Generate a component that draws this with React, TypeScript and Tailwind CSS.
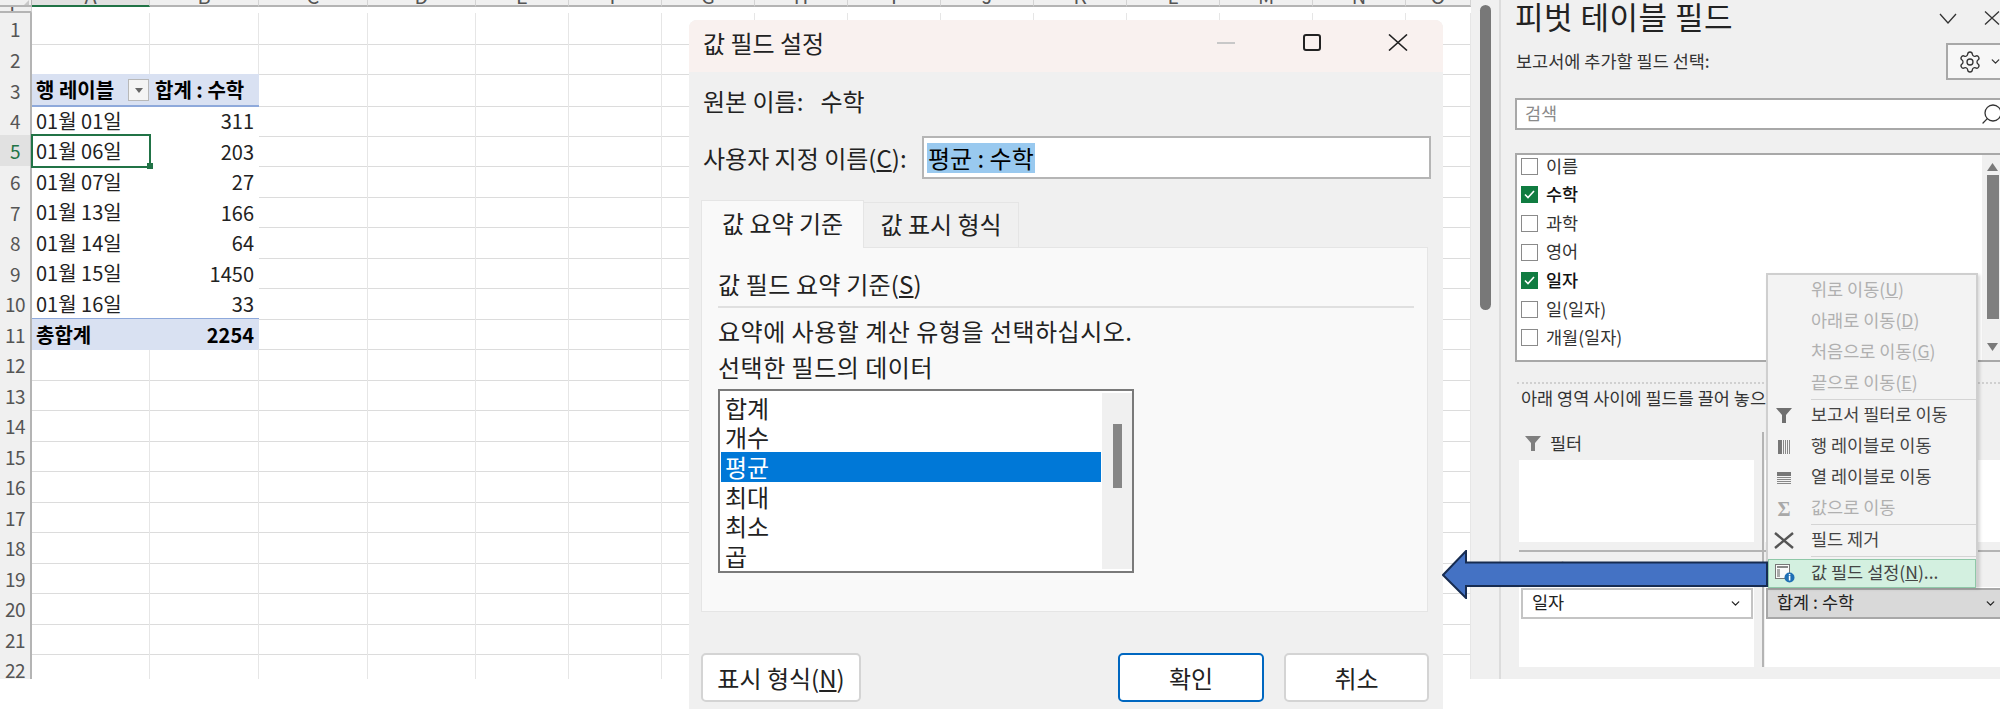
import { ChevronDown, Search, Settings } from "lucide-react"

const columns = ["A", "B", "C", "D", "E", "F", "G", "H", "I", "J", "K", "L", "M", "N", "O", "P"]

const pivotRows: Record<number, { label: string; value: string; kind?: "head" | "total" }> = {
  3: { label: "행 레이블", value: "합계 : 수학", kind: "head" },
  4: { label: "01월 01일", value: "311" },
  5: { label: "01월 06일", value: "203" },
  6: { label: "01월 07일", value: "27" },
  7: { label: "01월 13일", value: "166" },
  8: { label: "01월 14일", value: "64" },
  9: { label: "01월 15일", value: "1450" },
  10: { label: "01월 16일", value: "33" },
  11: { label: "총합계", value: "2254", kind: "total" },
}

const rowNumbers = Array.from({ length: 22 }, (_, i) => i + 1)
const gridTemplate =
  "grid grid-cols-[32px_118px_109px_109px_108px_93px_93px_93px_93px_93px_93px_93px_93px_93px_93px_65px]"

function Sheet() {
  return (
    <div className="w-[1471px] h-[679px] overflow-hidden bg-white text-[20px] text-[#222]">
      {/* Column headers, cut off by the crop */}
      <div className={`${gridTemplate} h-[13px]`}>
        <div className="flex justify-end items-start bg-[#f0f0f0] border-r border-b-2 border-[#b4b4b4] overflow-hidden">
          <svg width="12" height="11" className="mr-[2px]">
            <polygon points="12,0 12,10 2,10" fill="#c9c9c9" />
          </svg>
        </div>
        {columns.map((c, i) => (
          <div
            key={c}
            className={`flex justify-center items-start overflow-hidden border-r border-[#d4d4d4] text-[#555] ${
              i === 0 ? "bg-[#e1e1e1] border-b-2 border-b-[#217346]" : "bg-[#f0f0f0] border-b-2 border-b-[#b4b4b4]"
            }`}
          >
            <span className="block -mt-[14px] leading-[20px]">{c}</span>
          </div>
        ))}
      </div>

      {rowNumbers.map((n) => {
        const row = pivotRows[n]
        const isSelected = n === 5
        const fill = row?.kind ? "bg-[#d9e1f2] font-bold text-black" : ""
        return (
          <div key={n} className={`${gridTemplate} h-[30.55px]`}>
            <div
              className={`flex items-center justify-center border-r-2 border-b pt-[2px] border-r-[#b4b4b4] border-b-[#dcdcdc] text-[19px] tracking-[-0.5px] ${
                isSelected ? "bg-[#e1e1e1] text-[#217346]" : "bg-[#f0f0f0] text-[#555]"
              }`}
            >
              {n}
            </div>
            {columns.map((c, i) => {
              if (row && i === 0) {
                return (
                  <div
                    key={c}
                    className={`relative flex items-center pl-[4px] pt-[1px] ${fill} ${
                      row.kind === "head" ? "border-b-2 border-[#8ea9db]" : ""
                    } ${row.kind === "total" ? "border-t border-[#8ea9db]" : ""} ${
                      isSelected ? "outline-2 -outline-offset-1 outline-[#217346]" : ""
                    } ${row.kind ? "" : "border-b border-transparent"}`}
                  >
                    {row.label}
                    {row.kind === "head" && (
                      <span className="ml-auto mr-[1px] flex h-[22px] w-[21px] items-center justify-center border border-[#b8b8b8] bg-[#f4f4f4]">
                        <svg width="8" height="5">
                          <polygon points="0,0 8,0 4,5" fill="#666" />
                        </svg>
                      </span>
                    )}
                    {isSelected && <span className="absolute -right-[3px] -bottom-[3px] h-[6px] w-[6px] bg-[#217346]" />}
                  </div>
                )
              }
              if (row && i === 1) {
                return (
                  <div
                    key={c}
                    className={`flex items-center pt-[1px] ${
                      row.kind === "head" ? "justify-start pl-[5px]" : "justify-end pr-[5px]"
                    } ${fill} ${row.kind === "head" ? "border-b-2 border-[#8ea9db]" : ""} ${
                      row.kind === "total" ? "border-t border-[#8ea9db]" : ""
                    }`}
                  >
                    {row.value}
                  </div>
                )
              }
              return <div key={c} className="border-r border-b border-r-[#e6e6e6] border-b-[#dcdcdc]" />
            })}
          </div>
        )
      })}
    </div>
  )
}

function SheetScrollbar() {
  return (
    <div className="w-[28px] h-[679px] bg-[#f0f0f0] pt-[5px] pl-[9px]">
      <div className="h-[305px] w-[11px] rounded-full bg-[#787878]" />
    </div>
  )
}

const fieldRows = [
  { label: "이름" },
  { label: "수학", checked: true },
  { label: "과학" },
  { label: "영어" },
  { label: "일자", checked: true },
  { label: "일(일자)" },
  { label: "개월(일자)" },
]

function FunnelIcon({ color = "#7f7f7f" }: { color?: string }) {
  return (
    <svg width="16" height="15" viewBox="0 0 16 15">
      <polygon points="0,0 16,0 10,7 10,15 6,15 6,7" fill={color} />
    </svg>
  )
}

function PivotPanel() {
  return (
    <div className="flex h-[679px] w-[501px] flex-col overflow-hidden whitespace-nowrap border-l-2 border-[#dcdcdc] bg-[#f0f0f0] pl-[14px] text-[17.5px] text-[#333]">
      <div className="flex h-[32px] shrink-0 items-center">
        <span className="w-[424px] shrink-0 text-[31px] leading-[32px] tracking-[0.5px] text-[#222]">피벗 테이블 필드</span>
        <svg width="18" height="11" viewBox="0 0 18 11" className="mt-[4px] shrink-0">
          <path d="M1 1 L9 10 L17 1" fill="none" stroke="#333" strokeWidth="1.3" />
        </svg>
        <svg width="16" height="14" viewBox="0 0 16 14" className="ml-[27px] mt-[4px] shrink-0">
          <path d="M1 0.5 L15 13.5 M15 0.5 L1 13.5" fill="none" stroke="#333" strokeWidth="1.3" />
        </svg>
      </div>

      <div className="mt-[11px] flex h-[37px] shrink-0 items-center">
        <span className="ml-[1px] w-[430px] shrink-0 pb-[1px]">보고서에 추가할 필드 선택:</span>
        <div className="flex h-[37px] w-[70px] shrink-0 items-center border-2 border-[#a8a8a8] bg-[#f7f7f7] pl-[10px]">
          <Settings size={24} strokeWidth={1.3} className="shrink-0 text-[#333]" />
          <ChevronDown size={13} strokeWidth={2.4} className="ml-[7px] shrink-0 text-[#333]" />
        </div>
      </div>

      <div className="mt-[18px] flex h-[32px] w-[490px] shrink-0 items-center border-2 border-[#a8a8a8] bg-white pl-[8px] text-[#8a8a8a]">
        <span className="w-[455px] shrink-0 pb-[2px]">검색</span>
        <Search size={24} strokeWidth={1.3} className="-scale-x-100 text-[#333] shrink-0" />
      </div>

      <div className="mt-[23px] flex h-[209px] w-[490px] shrink-0 border-2 border-[#a8a8a8] bg-white">
        <div className="w-[465px] pl-[4px] -mt-[3px]">
          {fieldRows.map((f) => (
            <div key={f.label} className="flex h-[28.6px] items-center">
              {f.checked ? (
                <span className="flex h-[17px] w-[17px] items-center justify-center bg-[#107c41]">
                  <svg width="11" height="9" viewBox="0 0 11 9">
                    <path d="M1 4.5 L4 7.5 L10 1" fill="none" stroke="white" strokeWidth="1.6" />
                  </svg>
                </span>
              ) : (
                <span className="h-[17px] w-[17px] border border-[#8a8a8a] bg-white" />
              )}
              <span className={`ml-[8px] pb-[1px] ${f.checked ? "font-medium text-[#111]" : ""}`}>{f.label}</span>
            </div>
          ))}
        </div>
        <div className="flex w-[20px] flex-col items-start bg-[#f0f0f0] pl-[5px] pt-[8px]">
          <svg width="11" height="8" className="shrink-0">
            <polygon points="0,8 11,8 5.5,0" fill="#7a7a7a" />
          </svg>
          <div className="mt-[4px] h-[144px] w-[12px] shrink-0 bg-[#7f7f7f]" />
          <svg width="11" height="8" className="mt-[24px] shrink-0">
            <polygon points="0,0 11,0 5.5,8" fill="#7a7a7a" />
          </svg>
        </div>
      </div>

      <div className="mt-[20px] h-0 shrink-0 border-t-2 border-dotted border-[#d0d0d0] ml-[2px]" />
      <div className="flex h-[28px] shrink-0 items-center pl-[6px]">아래 영역 사이에 필드를 끌어 놓으십시오.</div>

      {/* Drop areas */}
      <div className="mt-[20px] flex h-[235px] shrink-0 pl-[4px]">
        <div className="w-[235px] shrink-0">
          <div className="flex h-[28px] items-center pb-[6px] pl-[6px]">
            <FunnelIcon />
            <span className="ml-[9px]">필터</span>
          </div>
          <div className="h-[82px] bg-white" />
          <div className="mt-[8px] w-[246px] border-t-2 border-[#b4b4b4]" />
          <div className="flex h-[35px] items-center pl-[30px]">행</div>
          <div className="h-[80px] bg-white pl-[2px] pt-[1px]">
            <div className="flex h-[31px] w-[232px] items-center border-2 border-[#c4c4c4] bg-white pl-[9px] text-[#222]">
              <span className="pb-[2px]">일자</span>
              <ChevronDown size={13} strokeWidth={2.4} className="ml-auto mr-[9px]" />
            </div>
          </div>
        </div>
        <div className="ml-[8px] w-[2px] shrink-0 bg-[#b4b4b4]" />
        <div className="ml-[1px] w-[260px] shrink-0">
          <div className="flex h-[28px] items-center pl-[6px]">열</div>
          <div className="h-[82px] bg-white" />
          <div className="mt-[8px] border-t-2 border-[#b4b4b4]" />
          <div className="flex h-[35px] items-center pl-[30px]">값</div>
          <div className="h-[80px] bg-white pl-[1px] pt-[1px]">
            <div className="flex h-[31px] w-[240px] items-center border-2 border-[#a8a8a8] bg-[#d9d9d9] pl-[9px] text-[#222]">
              <span className="w-[207px] shrink-0 pb-[2px]">합계 : 수학</span>
              <ChevronDown size={13} strokeWidth={2.4} className="shrink-0" />
            </div>
          </div>
        </div>
      </div>
    </div>
  )
}

function MenuItem({
  label,
  hotkey,
  disabled,
  icon,
}: {
  label: string
  hotkey?: string
  disabled?: boolean
  icon?: React.ReactNode
}) {
  return (
    <div className={`flex h-[31px] items-center ${disabled ? "text-[#b0b0b0]" : "text-[#444]"}`}>
      <span className="mr-[11px] flex w-[32px] justify-center">{icon}</span>
      <span className="whitespace-nowrap pb-[3px]">
        {label}
        {hotkey && (
          <>
            (<span className="underline">{hotkey}</span>)
          </>
        )}
      </span>
    </div>
  )
}

function ContextMenu() {
  return (
    <div className="absolute left-[1766px] top-[273px] h-[314px] w-[212px] border-2 border-[#cfcfcf] bg-[#f3f3f3] text-[17.5px] shadow-[2px_2px_3px_rgba(0,0,0,0.15)]">
      <MenuItem label="위로 이동" hotkey="U" disabled />
      <MenuItem label="아래로 이동" hotkey="D" disabled />
      <MenuItem label="처음으로 이동" hotkey="G" disabled />
      <MenuItem label="끝으로 이동" hotkey="E" disabled />
      <div className="ml-[43px] h-px bg-[#d4d4d4]" />
      <MenuItem label="보고서 필터로 이동" icon={<FunnelIcon color="#6f6f6f" />} />
      <MenuItem
        label="행 레이블로 이동"
        icon={
          <svg width="12" height="14">
            <rect x="0" width="4" height="14" fill="#777" />
            <path d="M5.5 0V14M7.5 0V14M9.5 0V14M11.5 0V14" stroke="#888" strokeWidth="1" />
          </svg>
        }
      />
      <MenuItem
        label="열 레이블로 이동"
        icon={
          <svg width="14" height="12">
            <rect y="0" width="14" height="4" fill="#777" />
            <path d="M0 5.5H14M0 7.5H14M0 9.5H14M0 11.5H14" stroke="#888" strokeWidth="1" />
          </svg>
        }
      />
      <MenuItem
        label="값으로 이동"
        disabled
        icon={<span className="font-['Liberation_Serif',serif] text-[20px] font-bold leading-none text-[#a8a8a8]">Σ</span>}
      />
      <div className="ml-[43px] h-px bg-[#d4d4d4]" />
      <MenuItem
        label="필드 제거"
        icon={
          <svg width="20" height="17" viewBox="0 0 20 17">
            <path d="M1 1 L19 16 M19 1 L1 16" stroke="#555" strokeWidth="2.4" />
          </svg>
        }
      />
      <div className="ml-[43px] h-px bg-[#d4d4d4]" />
      <div className="mt-[2px] flex h-[29px] items-center border border-[#8fc8a8] bg-[#d3f0e0] text-[#444]">
        <span className="mr-[11px] flex w-[31px] justify-center">
          <svg width="20" height="19" viewBox="0 0 20 19">
            <rect x="0.5" y="0.5" width="14" height="14" fill="#fafafa" stroke="#777" />
            <rect x="2" y="2" width="11" height="2" fill="#888" />
            <rect x="2" y="5" width="3" height="8" fill="#aaa" />
            <circle cx="14.5" cy="13.5" r="5" fill="#1f6fb5" />
            <rect x="13.8" y="12" width="1.6" height="4.5" fill="white" />
            <rect x="13.8" y="10" width="1.6" height="1.4" fill="white" />
          </svg>
        </span>
        <span className="whitespace-nowrap pb-[3px]">
          값 필드 설정(<span className="underline">N</span>)...
        </span>
      </div>
    </div>
  )
}

const summaryOptions = ["합계", "개수", "평균", "최대", "최소", "곱"]

function Underlined({ label, hotkey }: { label: string; hotkey: string }) {
  return (
    <span className="whitespace-nowrap">
      {label}(<span className="underline">{hotkey}</span>)
    </span>
  )
}

function ValueFieldDialog() {
  return (
    <div className="absolute left-[689px] top-[20px] flex h-[689px] w-[754px] flex-col overflow-hidden rounded-t-lg bg-[#f0f0f0] text-[24px] leading-[30px] text-[#222]">
      <div className="flex h-[52px] shrink-0 items-center bg-[#f9f1ef] pb-[7px] pl-[14px]">
        <span className="mr-auto">값 필드 설정</span>
        <span className="flex w-[86px] justify-center">
          <span className="h-[2px] w-[18px] bg-[#c8c8c8]" />
        </span>
        <span className="flex w-[86px] justify-center">
          <span className="h-[17px] w-[18px] rounded-[3px] border-2 border-[#222]" />
        </span>
        <span className="mr-[2px] flex w-[86px] justify-center">
          <svg width="20" height="17" viewBox="0 0 20 17">
            <path d="M1 0.5 L19 16.5 M19 0.5 L1 16.5" stroke="#222" strokeWidth="1.6" fill="none" />
          </svg>
        </span>
      </div>

      <div className="flex flex-col px-[12px]">
        <div className="flex h-[58px] items-center pb-[1px] pl-[2px]">
          <span>원본 이름:</span>
          <span className="ml-[17px]">수학</span>
        </div>

        <div className="mt-[6px] flex h-[43px] items-center pl-[2px]">
          <span className="w-[219px]">
            <Underlined label="사용자 지정 이름" hotkey="C" />:
          </span>
          <div className="flex h-[43px] w-[509px] items-center border-2 border-[#b5b5b5] bg-white pl-[3px]">
            <span className="bg-[#99c9ef] px-[1px] text-black">평균 : 수학</span>
          </div>
        </div>

        <div className="mt-[21px] flex h-[47px] items-end">
          <div className="z-10 -mb-px flex h-[48px] w-[163px] items-center justify-center border border-b-0 border-[#e5e5e5] bg-[#f9f9f9] pb-[3px]">
            값 요약 기준
          </div>
          <div className="flex h-[45px] w-[155px] items-center justify-center border border-b-0 border-l-0 border-[#e5e5e5] bg-[#f0f0f0] pb-[2px]">
            값 표시 형식
          </div>
        </div>

        <div className="h-[365px] w-[727px] border border-[#e5e5e5] bg-[#f9f9f9] pl-[16px]">
          <div className="flex h-[58px] items-center pt-[13px] tracking-[0.2px]">
            <Underlined label="값 필드 요약 기준" hotkey="S" />
          </div>
          <div className="h-[2px] w-[696px] bg-[#e0e0e0]" />
          <div className="flex h-[46px] items-center whitespace-nowrap tracking-[0.5px]">
            요약에 사용할 계산 유형을 선택하십시오.
          </div>
          <div className="flex h-[26px] items-center tracking-[0.5px]">선택한 필드의 데이터</div>
          <div className="mt-[9px] flex h-[184px] w-[416px] border-2 border-[#7a7a7a] bg-white pl-[1px] pt-[2px]">
            <div className="w-[380px]">
              {summaryOptions.map((o) => (
                <div
                  key={o}
                  className={`flex h-[29.6px] items-center pl-[4px] ${o === "평균" ? "bg-[#0078d7] text-white" : ""}`}
                >
                  {o}
                </div>
              ))}
            </div>
            <div className="ml-[1px] h-[176px] w-[30px] bg-[#f0f0f0] pl-[11px] pt-[31px]">
              <div className="h-[64px] w-[9px] bg-[#868686]" />
            </div>
          </div>
        </div>

        <div className="mt-[41px] flex w-[728px] items-center">
          <button className="h-[49px] w-[160px] rounded-[5px] border-2 border-[#d4d4d4] bg-white">
            <Underlined label="표시 형식" hotkey="N" />
          </button>
          <button className="ml-auto h-[49px] w-[146px] rounded-[5px] border-2 border-[#0067c0] bg-white">확인</button>
          <button className="ml-[20px] h-[49px] w-[145px] rounded-[5px] border-2 border-[#d4d4d4] bg-white">취소</button>
        </div>
      </div>
    </div>
  )
}

function PointerArrow() {
  return (
    <svg width="326" height="49" viewBox="0 0 326 49" className="absolute left-[1442px] top-[550px]">
      <polygon
        points="1,25 24,1 24,12.5 325,12.5 325,36 24,36 24,48"
        fill="#4472c4"
        stroke="#172c51"
        strokeWidth="2"
      />
    </svg>
  )
}

export default function App() {
  return (
    <div className="relative h-[709px] w-[2000px] overflow-hidden bg-white font-['Noto_Sans_CJK_KR',sans-serif]">
      <div className="flex">
        <Sheet />
        <SheetScrollbar />
        <PivotPanel />
      </div>
      <ValueFieldDialog />
      <ContextMenu />
      <PointerArrow />
    </div>
  )
}
